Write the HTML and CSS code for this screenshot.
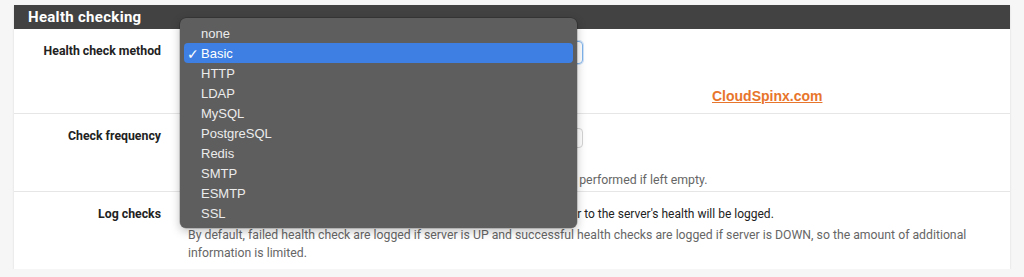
FILE: index.html
```html
<!DOCTYPE html>
<html>
<head>
<meta charset="utf-8">
<link rel="stylesheet" href="styles.css">
</head>
<body>
<div class="panel">
  <div class="panel-heading">Health checking</div>
  <div class="row row-method">
    <div class="label">Health check method</div>
    <div class="content">
      <div class="select"><span class="chev">⌄</span></div>
      <div class="brand"><a href="#">CloudSpinx.com</a></div>
    </div>
  </div>
  <div class="row row-freq">
    <div class="label">Check frequency</div>
    <div class="content">
      <div class="input"></div>
      <div class="help">Time in milliseconds between checks. For TCP checks, no check will be performed if left empty.</div>
    </div>
  </div>
  <div class="row row-log">
    <div class="label">Log checks</div>
    <div class="content">
      <div class="check-line"><span class="box"></span>When this option is enabled, any changes of the health check status or to the server's health will be logged.</div>
      <div class="help">By default, failed health check are logged if server is UP and successful health checks are logged if server is DOWN, so the amount of additional information is limited.</div>
    </div>
  </div>

  <ul class="menu">
    <li>none</li>
    <li class="sel"><span class="tick">✓</span>Basic</li>
    <li>HTTP</li>
    <li>LDAP</li>
    <li>MySQL</li>
    <li>PostgreSQL</li>
    <li>Redis</li>
    <li>SMTP</li>
    <li>ESMTP</li>
    <li>SSL</li>
  </ul>
</div>
</body>
</html>
```

FILE: styles.css
```css
html, body {
  margin: 0;
  padding: 0;
  background: #f6f6f6;
  font-family: Roboto, "Liberation Sans", sans-serif;
}

.panel {
  position: relative;
  margin: 5px 14px 0 14px;
  width: 996px;
  background: #ffffff;
  box-shadow: 0 1px 2px rgba(0,0,0,0.12);
}

.panel-heading {
  height: 24px;
  line-height: 24px;
  background: #424242;
  color: #ffffff;
  font-weight: bold;
  font-size: 15px;
  letter-spacing: 0.3px;
  padding-left: 14px;
}

.row {
  display: grid;
  grid-template-columns: 174px 1fr;
  border-bottom: 1px solid #e6e6e6;
}
.row:last-of-type { border-bottom: none; }

.label {
  text-align: right;
  padding-right: 27px;
  font-weight: bold;
  font-size: 12.3px;
  color: #222;
}

.row-method { height: 84px; }
.row-method .label { padding-top: 15px; }
.row-method .content { padding-top: 12px; }

.select {
  width: 393px;
  height: 21px;
  border: 1px solid #7fb3ec;
  border-radius: 4px;
  box-shadow: 0 0 0 1px rgba(127,179,236,0.35);
  position: relative;
}
.chev {
  position: absolute;
  right: 4px;
  top: -3px;
  font-size: 11px;
  color: #555;
}

.brand {
  padding-left: 524px;
  padding-top: 22px;
}
.brand a {
  color: #e8752c;
  font-weight: bold;
  font-size: 14px;
  font-family: "Liberation Sans", Arial, sans-serif;
  text-decoration: underline;
  text-decoration-thickness: 1px;
}

.row-freq { height: 77px; }
.row-freq .label { padding-top: 15px; }
.row-freq .content { padding-top: 14px; }

.input {
  width: 393px;
  height: 18px;
  border: 1px solid #d4d4d4;
  border-radius: 4px;
}

.help {
  font-size: 12.25px;
  color: #666666;
  line-height: 18px;
}
.row-freq .help { padding-top: 23px; font-size: 12.3px; }

.row-log { height: 77px; }
.row-log .label { padding-top: 15px; }
.row-log .content { padding-top: 14px; }

.check-line {
  font-size: 12px;
  color: #222;
  line-height: 16px;
  display: flex;
  align-items: center;
}
.box {
  width: 12px;
  height: 12px;
  border: 1px solid #aaa;
  border-radius: 2px;
  margin-right: 5px;
}
.row-log .help { padding-top: 4px; padding-right: 30px; }

.menu {
  position: absolute;
  left: 166px;
  top: 13px;
  width: 389px;
  margin: 0;
  padding: 5px 4px;
  list-style: none;
  background: #5e5e5e;
  border-radius: 6px;
  box-shadow: 0 3px 10px rgba(0,0,0,0.25), 0 0 0 0.5px rgba(0,0,0,0.3);
  font-family: "Liberation Sans", Arial, sans-serif;
  font-size: 13px;
  color: #ececec;
}
.menu li {
  height: 19px;
  padding-top: 1px;
  line-height: 20px;
  padding-left: 17px;
  position: relative;
  border-radius: 4px;
}
.menu li.sel {
  background: #3e7fe3;
  color: #ffffff;
}
.tick {
  position: absolute;
  left: 3px;
  top: 1px;
  font-size: 14px;
  font-family: "DejaVu Sans", sans-serif;
}
```
